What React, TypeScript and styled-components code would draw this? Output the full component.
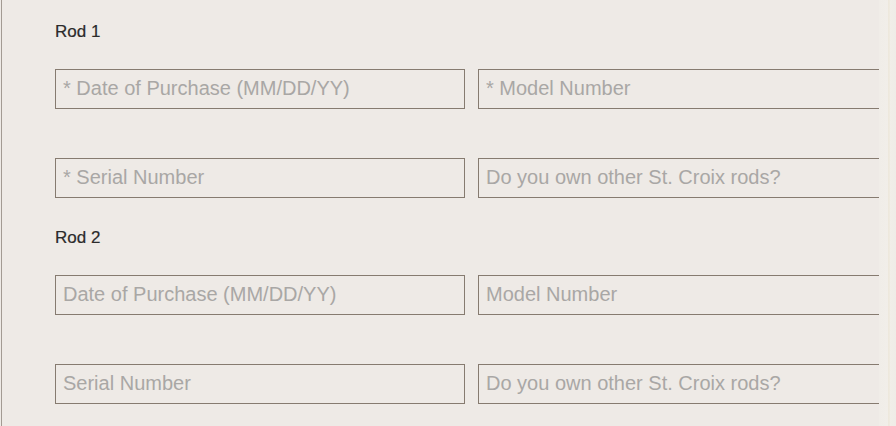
import React from 'react';
import styled, { createGlobalStyle } from 'styled-components';

const GlobalStyle = createGlobalStyle`
  html, body {
    margin: 0;
    padding: 0;
    background: #eeeae6;
  }

  body {
    font-family: 'Liberation Sans', Arial, sans-serif;
    overflow: hidden;
  }
`;

type RodField = { name: string; placeholder: string };

const rods: { title: string; required: boolean }[] = [
  { title: 'Rod 1', required: true },
  { title: 'Rod 2', required: false },
];

const buildFields = (required: boolean): RodField[] => {
  const mark = required ? '* ' : '';
  return [
    { name: 'purchaseDate', placeholder: `${mark}Date of Purchase (MM/DD/YY)` },
    { name: 'modelNumber', placeholder: `${mark}Model Number` },
    { name: 'serialNumber', placeholder: `${mark}Serial Number` },
    { name: 'otherRods', placeholder: 'Do you own other St. Croix rods?' },
  ];
};

const App = () => {
  return (
    <>
      <GlobalStyle />
      <Layout>
        <FormPanel>
          {rods.map((rod, i) => (
            <RodSection key={rod.title}>
              <RodTitle>{rod.title}</RodTitle>
              <FieldGrid>
                {buildFields(rod.required).map((field) => (
                  <TextInput
                    key={field.name}
                    name={`rod${i + 1}-${field.name}`}
                    placeholder={field.placeholder}
                  />
                ))}
              </FieldGrid>
            </RodSection>
          ))}
        </FormPanel>
        <Gutter />
      </Layout>
    </>
  );
};

export default App;

const Layout = styled.div`
  display: flex;
  width: 896px;
  height: 426px;
  padding-left: 1px;
  box-sizing: border-box;
`;

const FormPanel = styled.main`
  flex: 1;
  display: flex;
  flex-direction: column;
  gap: 30px;
  padding: 22px 0 0 53px;
  border-left: 1px solid #a39b93;
  overflow: hidden;
`;

const Gutter = styled.div`
  width: 17px;
  background: linear-gradient(
    to right,
    #f0ede8 0%,
    #f1eee9 50%,
    #ece6d8 58%,
    #f1eee8 66%,
    #efece7 100%
  );
`;

const RodSection = styled.section`
  display: flex;
  flex-direction: column;
`;

const RodTitle = styled.h2`
  margin: 0 0 27px;
  font-size: 17px;
  line-height: 20px;
  font-weight: 400;
  color: #2b2b2b;
  -webkit-text-stroke: 0.2px #2b2b2b;
`;

const FieldGrid = styled.div`
  display: grid;
  grid-template-columns: 410px 420px;
  column-gap: 13px;
  row-gap: 49px;
`;

const TextInput = styled.input`
  box-sizing: border-box;
  width: 100%;
  height: 40px;
  margin: 0;
  padding: 0 7px 2px;

  font-family: 'Liberation Sans', Arial, sans-serif;
  font-size: 20px;
  color: #444;

  background: transparent;
  border: 1px solid #867b70;
  border-radius: 0;
  outline: none;

  &::placeholder {
    color: #a9a7a5;
    opacity: 1;
  }
`;
